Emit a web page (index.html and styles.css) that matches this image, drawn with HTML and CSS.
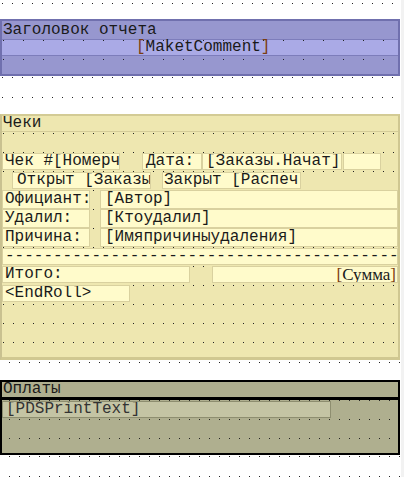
FILE: index.html
```html
<!DOCTYPE html>
<html lang="ru">
<head>
<meta charset="utf-8">
<title>Report designer</title>
<link rel="stylesheet" href="styles.css">
</head>
<body>
<div class="canvas">
  <div class="gap gap-top"></div>

  <section class="band band-title">
    <div class="band-head">Заголовок отчета</div>
    <div class="title-comment"><span class="br">[</span>MaketComment<span class="br">]</span></div>
    <div class="title-rest"></div>
  </section>

  <div class="gap gap-mid"></div>

  <section class="band band-checks">
    <div class="band-head">Чеки</div>
    <div class="band-body">
      <div class="row r1">
        <div class="el el-check">Чек #[Номерч</div>
        <div class="el el-date">Дата:</div>
        <div class="el el-start">[Заказы.Начат]</div>
        <div class="el el-extra"></div>
      </div>
      <div class="row r2">
        <div class="el el-open">Открыт [Заказы</div>
        <div class="el el-close">Закрыт [Распеч</div>
      </div>
      <div class="row r3">
        <div class="el el-label">Официант:</div>
        <div class="el el-value">[Автор]</div>
      </div>
      <div class="row r3">
        <div class="el el-label">Удалил:</div>
        <div class="el el-value">[Ктоудалил]</div>
      </div>
      <div class="row r3">
        <div class="el el-label">Причина:</div>
        <div class="el el-value">[Имяпричиныудаления]</div>
      </div>
      <div class="row r6">
        <div class="el el-dash">-----------------------------------------</div>
      </div>
      <div class="row r7">
        <div class="el el-total">Итого:</div>
        <div class="el el-sum"><span class="br">[</span>Сумма<span class="br">]</span></div>
      </div>
      <div class="row r8">
        <div class="el el-end">&lt;EndRoll&gt;</div>
      </div>
    </div>
  </section>

  <div class="gap gap-low"></div>

  <section class="band band-pay">
    <div class="band-head">Оплаты</div>
    <div class="band-body">
      <div class="el el-pds">[PDSPrintText]</div>
    </div>
  </section>

  <div class="gap gap-bottom"></div>
</div>
</body>
</html>
```

FILE: styles.css
```css
html {
  background: #f2f2f2;
}
body {
  margin: 0;
  font-family: "Liberation Mono", "Courier New", monospace;
  font-size: 16px;
  color: #1a1a1a;
}
.canvas {
  width: 401px;
  height: 477px;
  background: #fff;
  overflow: hidden;
}

/* dotted grid helpers: top layer masks all but the first pixel row */
.gap {
  width: 401px;
  background-color: #fff;
  background-image:
    linear-gradient(to bottom, transparent 1px, #fff 1px),
    linear-gradient(to right, #222 1px, #fff 1px);
  background-size: 10px 20px;
}
.gap-top { height: 19px; background-position: 2px 3px; }
.gap-mid { height: 38px; background-position: 2px 1px; }
.gap-low { height: 20px; background-position: 9px 2px; }
.gap-bottom { height: 22px; background-position: 9px 1px; }

.band {
  width: 400px;
  box-sizing: border-box;
}
.band-head {
  padding-left: 1px;
  white-space: nowrap;
}

/* ---- title band ---- */
.band-title {
  border: 2px solid #7070ae;
  background-color: #9797cf;
}
.band-title .band-head {
  height: 18px;
  line-height: 18px;
  border-bottom: 1px solid #7d7dbb;
}
.title-comment {
  height: 15px;
  line-height: 15px;
  padding-left: 134px;
  background-color: #aaaae6;
  background-image:
    linear-gradient(to bottom, transparent 1px, #aaaae6 1px),
    linear-gradient(to right, #222 1px, #aaaae6 1px);
  background-size: 20px 19px;
  background-position: 21px 0;
  border-bottom: 1px solid #7d7dbb;
  white-space: nowrap;
}
.title-rest {
  height: 18px;
  background-image:
    linear-gradient(to bottom, transparent 1px, #9797cf 1px),
    linear-gradient(to right, #222 1px, #9797cf 1px);
  background-size: 20px 19px;
  background-position: 21px 3px;
}
.br { color: #7a3d10; }

/* ---- checks band ---- */
.band-checks {
  border-top: 2px solid #d3cb95;
  border-left: 2px solid #c9c190;
  border-right: 2px solid #cfc791;
  border-bottom: 3px solid #d0c891;
  background-color: #eee7b0;
}
.band-checks .band-head {
  height: 15px;
  line-height: 15px;
  border-bottom: 1px solid #d4cc98;
}
.band-checks .band-body {
  height: 225px;
  padding-top: 21px;
  box-sizing: border-box;
  display: flex;
  flex-direction: column;
  background-image:
    linear-gradient(to bottom, transparent 1px, #eee7b0 1px),
    linear-gradient(to right, #222 1px, #eee7b0 1px);
  background-size: 10px 19px;
  background-position: 1px 1px;
}
.row {
  display: flex;
  height: 17px;
}
.el {
  box-sizing: border-box;
  height: 100%;
  background: #fffbcb;
  border: 1px solid #d9d19f;
  line-height: 15px;
  white-space: nowrap;
  overflow: hidden;
  padding-left: 2px;
}
.r2 { margin-top: 2px; }
.r3 { height: 19px; }
.r3 .el { line-height: 17px; }
.r2 + .r3 { margin-top: 1px; }
.r6 { margin-top: 1px; }
.r7 { margin-top: 1px; }
.r8 { margin-top: 2px; }

.el-check { width: 118px; }
.el-date { width: 60px; margin-left: 22px; padding-left: 3px; }
.el-start { width: 140px; padding-left: 3px; }
.el-extra { width: 38px; margin-left: 1px; }
.el-open { width: 139px; margin-left: 10px; padding-left: 4px; }
.el-close { width: 139px; margin-left: 11px; padding-left: 1px; }
.el-label { width: 88px; }
.el-value { flex: 1; margin-left: 10px; padding-left: 4px; }
.el-dash { flex: 1; }
.el-total { width: 188px; }
.el-sum {
  flex: 1;
  margin-left: 22px;
  text-align: right;
  padding-right: 1px;
  font-family: "Liberation Serif", "Times New Roman", serif;
  font-size: 17px;
}
.el-end { width: 128px; }

/* ---- payments band ---- */
.band-pay {
  border: 2px solid #000;
  background-color: #afaf8f;
}
.band-pay .band-head {
  height: 15px;
  line-height: 15px;
  border-bottom: 3px solid #000;
}
.band-pay .band-body {
  height: 53px;
  padding-top: 1px;
  box-sizing: border-box;
  background-image:
    linear-gradient(to bottom, transparent 1px, #afaf8f 1px),
    linear-gradient(to right, #222 1px, #afaf8f 1px);
  background-size: 10px 19px;
  background-position: 7px 0;
}
.el-pds {
  width: 329px;
  height: 17px;
  background: #c4c4a4;
  border: 1px solid #8e8e70;
  padding-left: 3px;
  color: #333;
}
```
